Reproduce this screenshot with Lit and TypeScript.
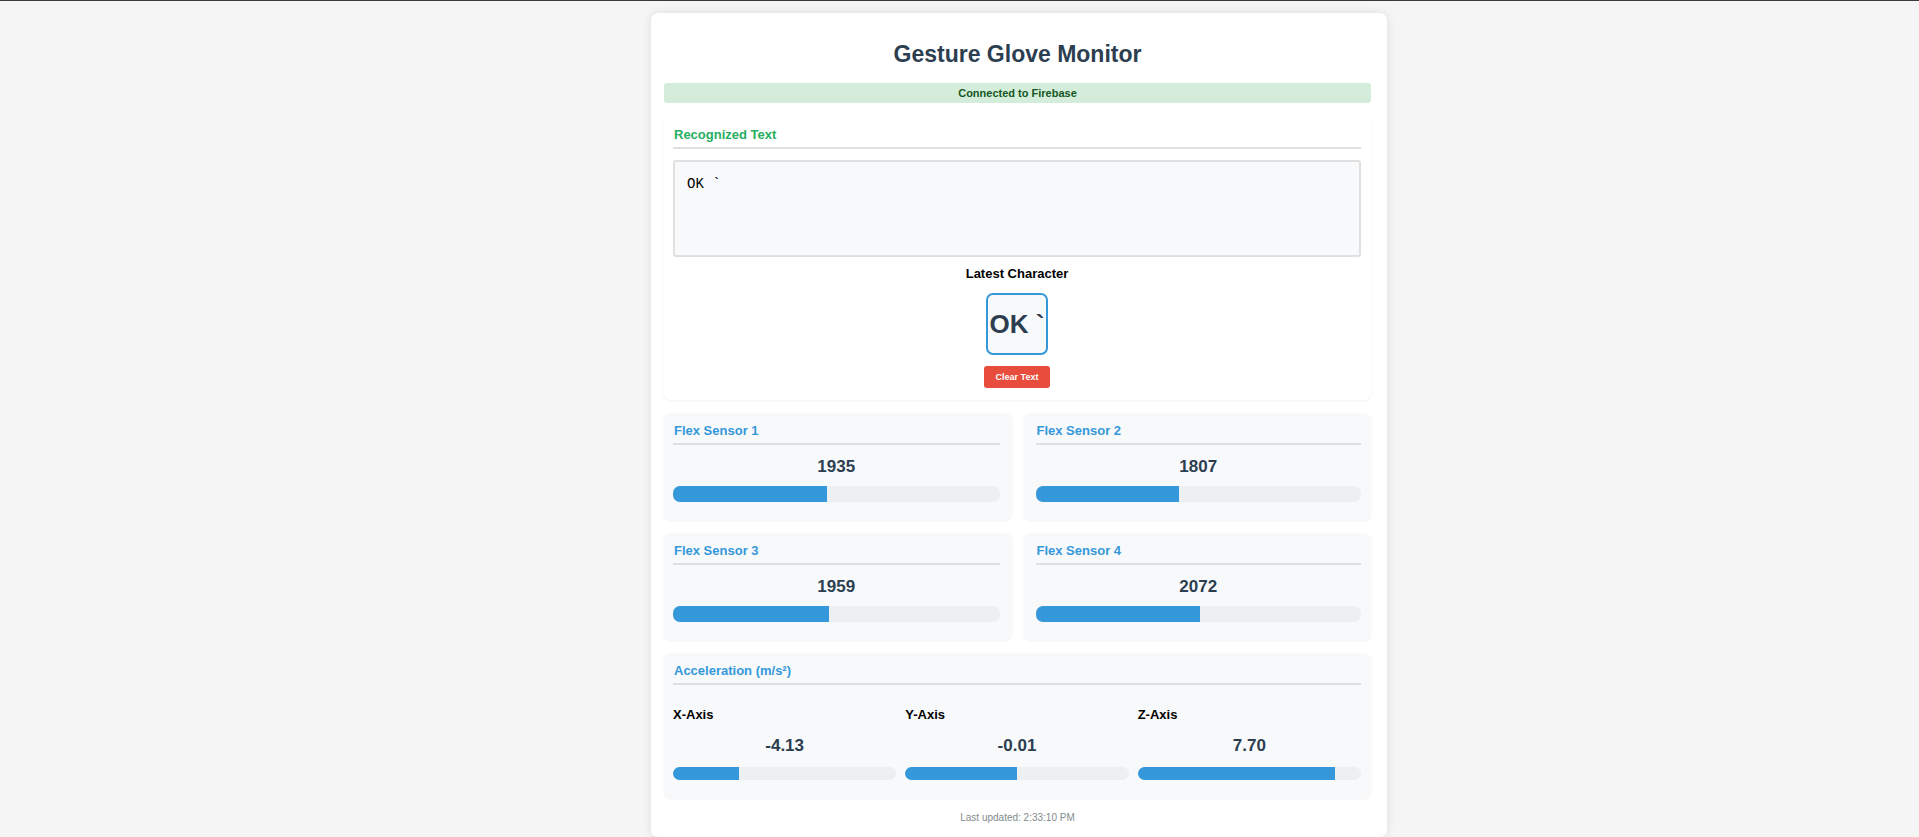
import { LitElement, html, css } from "lit";
import { customElement, property, state } from "lit/decorators.js";
import { styleMap } from "lit/directives/style-map.js";

@customElement("value-bar")
class ValueBar extends LitElement {
  @property() label = "";
  @property({ type: Number }) value = 0;
  @property({ type: Number }) min = 0;
  @property({ type: Number }) max = 100;

  static styles = css`
    :host {
      display: block;
      height: 16px;
      border-radius: 7px;
      background: #ecf0f1;
      overflow: hidden;
    }
    .fill {
      height: 100%;
      background: #3498db;
    }
  `;

  render() {
    const percent = ((this.value - this.min) / (this.max - this.min)) * 100;
    return html`<div
      class="fill"
      role="progressbar"
      aria-label=${this.label}
      aria-valuemin=${this.min}
      aria-valuemax=${this.max}
      aria-valuenow=${this.value}
      style=${styleMap({ width: `${percent}%` })}
    ></div>`;
  }
}

@customElement("app-root")
class AppRoot extends LitElement {
  @state() private text = "OK `";
  @state() private latest = "OK `";
  @state() private flex = [1935, 1807, 1959, 2072];
  @state() private axes = [
    { name: "X-Axis", value: -4.13 },
    { name: "Y-Axis", value: -0.01 },
    { name: "Z-Axis", value: 7.7 },
  ];

  static styles = css`
    :host {
      display: block;
      box-sizing: border-box;
      min-height: 100vh;
      padding: 12px 0 0 119px;
      border-top: 1px solid #3a3a3c;
      background: #f5f5f5;
      color: #000;
      font-family: Arial, "Liberation Sans", sans-serif;
    }
    * {
      box-sizing: border-box;
    }
    .container {
      display: flex;
      flex-direction: column;
      gap: 13px;
      max-width: 736px;
      margin: 0 auto;
      padding: 27px 16px 12px 13px;
      border-radius: 7px;
      background: #fff;
      box-shadow: 0 0 10px rgba(0, 0, 0, 0.1);
    }
    h1 {
      margin: 0 0 2px;
      color: #2c3e50;
      font-size: 23px;
      line-height: 28px;
      text-align: center;
    }
    .status {
      border-radius: 3px;
      background: #d4edda;
      color: #155724;
      font-size: 11px;
      font-weight: bold;
      line-height: 20px;
      text-align: center;
    }
    .card {
      padding: 9px 10px 18px 9px;
      border-radius: 7px;
      background: #f8f9fa;
      box-shadow: 0 1px 3px rgba(0, 0, 0, 0.06);
    }
    .card.recognized {
      padding-bottom: 12px;
      background: #fff;
    }
    h2 {
      margin: 0;
      padding: 0 1px 4px;
      border-bottom: 2px solid #e0e0e0;
      color: #3498db;
      font-size: 13px;
      line-height: 17px;
    }
    .recognized h2 {
      padding-top: 1px;
      color: #27ae60;
    }
    h3 {
      margin: 0;
      font-size: 13px;
      line-height: 16px;
    }
    .output {
      display: block;
      width: 100%;
      height: 97px;
      margin: 11px 0 9px;
      padding: 13px 12px;
      border: 2px solid #e0e0e0;
      border-radius: 3px;
      outline: none;
      background: #f8f9fa;
      color: #000;
      font: 14px/18px "Courier New", "Liberation Mono", monospace;
      resize: none;
    }
    .latest {
      display: flex;
      flex-direction: column;
      align-items: center;
    }
    .character {
      display: flex;
      align-items: center;
      justify-content: center;
      width: 62px;
      height: 62px;
      margin: 11px 0;
      border: 2px solid #3498db;
      border-radius: 7px;
      background: #f8f9fa;
      color: #2c3e50;
      font-size: 26px;
      font-weight: bold;
      white-space: nowrap;
    }
    .clear {
      padding: 0 12px;
      border: 0;
      border-radius: 3px;
      background: #e74c3c;
      color: #fff;
      font: bold 9px/22px Arial, "Liberation Sans", sans-serif;
      cursor: pointer;
    }
    .sensors {
      display: grid;
      grid-template-columns: 1fr 1fr;
      gap: 13px 12px;
    }
    .sensors .card:nth-child(odd) {
      padding-right: 12px;
    }
    .sensors .card:nth-child(even) {
      padding-left: 12px;
    }
    .value {
      margin: 11px 0 9px;
      color: #2c3e50;
      font-size: 17px;
      font-weight: bold;
      line-height: 21px;
      text-align: center;
    }
    .axes {
      display: grid;
      grid-template-columns: repeat(3, 1fr);
      gap: 9px;
      padding-top: 22px;
    }
    .axes .value {
      margin: 12px 0 11px;
    }
    .axes value-bar {
      height: 13px;
    }
    .updated {
      color: #7f8c8d;
      font-size: 10px;
      line-height: 14px;
      text-align: center;
    }
  `;

  private clear() {
    this.text = "";
    this.latest = "";
  }

  render() {
    return html`
      <main class="container">
        <h1>Gesture Glove Monitor</h1>
        <div class="status" role="status">Connected to Firebase</div>

        <section class="card recognized">
          <h2><label for="output">Recognized Text</label></h2>
          <textarea id="output" class="output" readonly .value=${this.text}></textarea>
          <div class="latest">
            <h3>Latest Character</h3>
            <div class="character">${this.latest}</div>
            <button class="clear" type="button" @click=${this.clear}>Clear Text</button>
          </div>
        </section>

        <div class="sensors">
          ${this.flex.map(
            (value, i) => html`
              <section class="card">
                <h2>Flex Sensor ${i + 1}</h2>
                <div class="value">${value}</div>
                <value-bar label="Flex Sensor ${i + 1}" .value=${value} .max=${4095}></value-bar>
              </section>
            `
          )}
        </div>

        <section class="card">
          <h2>Acceleration (m/s²)</h2>
          <div class="axes">
            ${this.axes.map(
              (axis) => html`
                <div>
                  <h3>${axis.name}</h3>
                  <div class="value">${axis.value.toFixed(2)}</div>
                  <value-bar label=${axis.name} .value=${axis.value} .min=${-10} .max=${10}></value-bar>
                </div>
              `
            )}
          </div>
        </section>

        <div class="updated">Last updated: 2:33:10 PM</div>
      </main>
    `;
  }
}
